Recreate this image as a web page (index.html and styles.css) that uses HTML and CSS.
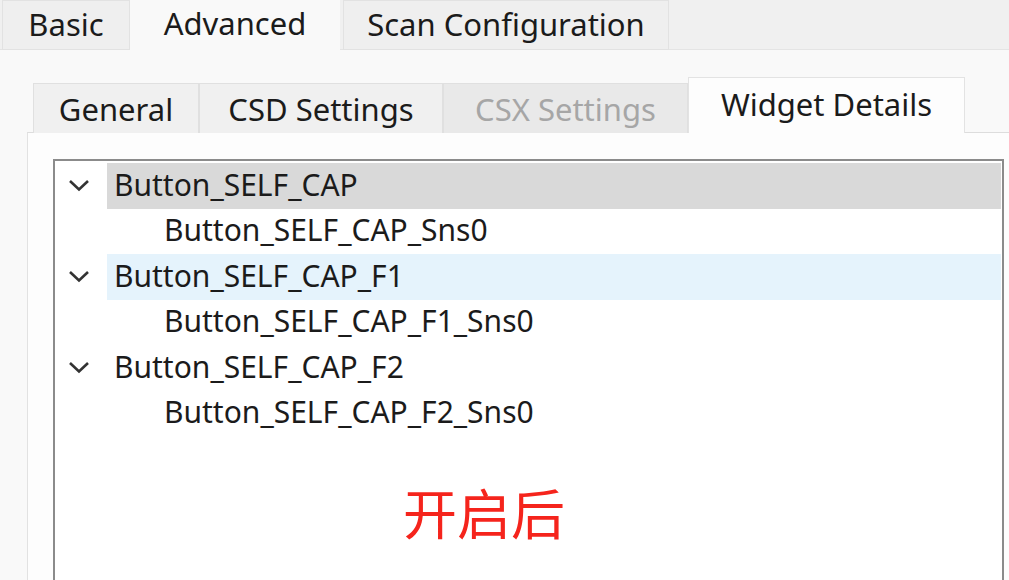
FILE: index.html
```html
<!DOCTYPE html>
<html lang="en">
<head>
  <meta charset="UTF-8">
  <meta name="viewport" content="width=device-width, initial-scale=1.0">
  <title>Widget Details</title>
  <link rel="stylesheet" href="styles.css">
</head>
<body>
  <div class="tabbar">
    <div class="tab tab-basic">Basic</div>
    <div class="tab tab-advanced active">Advanced</div>
    <div class="tab tab-scan">Scan Configuration</div>
  </div>
  <div class="panel">
    <div class="subtabbar">
      <div class="subtab sub-general">General</div>
      <div class="subtab sub-csd">CSD Settings</div>
      <div class="subtab sub-csx disabled">CSX Settings</div>
      <div class="subtab sub-widget active">Widget Details</div>
    </div>
    <div class="pane">
      <div class="tree">
        <div class="row">
          <span class="toggle"><svg width="22" height="13" viewBox="0 0 22 13"><path d="M2 2 L11 10.5 L20 2" fill="none" stroke="#333" stroke-width="2.6"/></svg></span>
          <span class="label selected">Button_SELF_CAP</span>
        </div>
        <div class="row child"><span class="label">Button_SELF_CAP_Sns0</span></div>
        <div class="row">
          <span class="toggle"><svg width="22" height="13" viewBox="0 0 22 13"><path d="M2 2 L11 10.5 L20 2" fill="none" stroke="#333" stroke-width="2.6"/></svg></span>
          <span class="label hover">Button_SELF_CAP_F1</span>
        </div>
        <div class="row child"><span class="label">Button_SELF_CAP_F1_Sns0</span></div>
        <div class="row">
          <span class="toggle"><svg width="22" height="13" viewBox="0 0 22 13"><path d="M2 2 L11 10.5 L20 2" fill="none" stroke="#333" stroke-width="2.6"/></svg></span>
          <span class="label">Button_SELF_CAP_F2</span>
        </div>
        <div class="row child"><span class="label">Button_SELF_CAP_F2_Sns0</span></div>
        <div class="note">开启后</div>
      </div>
    </div>
  </div>
</body>
</html>
```

FILE: styles.css
```css
html, body {
  margin: 0;
  height: 100%;
}
body {
  width: 1009px;
  height: 580px;
  overflow: hidden;
  background: #f9f9f9;
  font-family: "Noto Sans", "Open Sans", sans-serif;
  font-size: 31px;
  color: #1b1b1b;
}
.tabbar {
  display: flex;
  height: 50px;
  background: #f0f0f0;
  border-bottom: 1px solid #e4e4e4;
  box-sizing: border-box;
  padding-left: 2px;
}
.tab {
  display: flex;
  align-items: center;
  justify-content: center;
  height: 50px;
  box-sizing: border-box;
  background: #efefef;
  border: 1px solid #e2e2e2;
  padding-bottom: 2px;
}
.tab-basic { width: 128px; }
.tab-advanced { width: 210px; }
.tab-scan { width: 326px; margin-left: 3px; }
.tab.active {
  background: #f9f9f9;
  border-color: #f9f9f9;
  height: 51px;
  padding-bottom: 6px;
}
.panel {
  padding-left: 27px;
  padding-top: 27px;
}
.subtabbar {
  display: flex;
  align-items: flex-end;
  height: 56px;
  padding-left: 6px;
  position: relative;
  z-index: 1;
  margin-bottom: -1px;
}
.subtab {
  display: flex;
  align-items: center;
  justify-content: center;
  height: 50px;
  box-sizing: border-box;
  background: #f0f0f0;
  border: 1px solid #e0e0e0;
  border-bottom: none;
}
.sub-general { width: 166px; }
.sub-csd { width: 244px; }
.sub-csx { width: 245px; }
.sub-widget { width: 277px; }
.subtab.disabled {
  background: #e9e9e9;
  color: #a6a6a6;
}
.subtab.active {
  height: 56px;
  background: #fdfdfd;
  border-color: #e3e3e3;
  padding-bottom: 4px;
}
.pane {
  background: #fdfdfd;
  border-top: 1px solid #dddddd;
  border-left: 1px solid #e2e2e2;
  padding: 26px 0 0 25px;
  height: 460px;
  box-sizing: border-box;
}
.tree {
  width: 951px;
  height: 440px;
  box-sizing: border-box;
  border: 2px solid #8b8b8b;
  border-bottom: none;
  background: #ffffff;
  padding-top: 2px;
  font-size: 30px;
}
.row {
  display: flex;
  align-items: stretch;
  height: 45.5px;
}
.toggle {
  width: 52px;
  display: flex;
  align-items: center;
  padding-left: 13px;
  box-sizing: border-box;
}
.label {
  flex: 1;
  display: flex;
  align-items: center;
  padding-left: 7px;
  padding-bottom: 3px;
  margin-right: 1px;
}
.row.child .label {
  padding-left: 57px;
}
.row.child {
  padding-left: 52px;
}
.label.selected {
  background: #d9d9d9;
}
.label.hover {
  background: #e5f3fc;
}
.note {
  margin-top: 46px;
  margin-left: 348px;
  font-family: "Noto Sans CJK SC", sans-serif;
  font-size: 54px;
  color: #f5241c;
  line-height: 60px;
}
```
